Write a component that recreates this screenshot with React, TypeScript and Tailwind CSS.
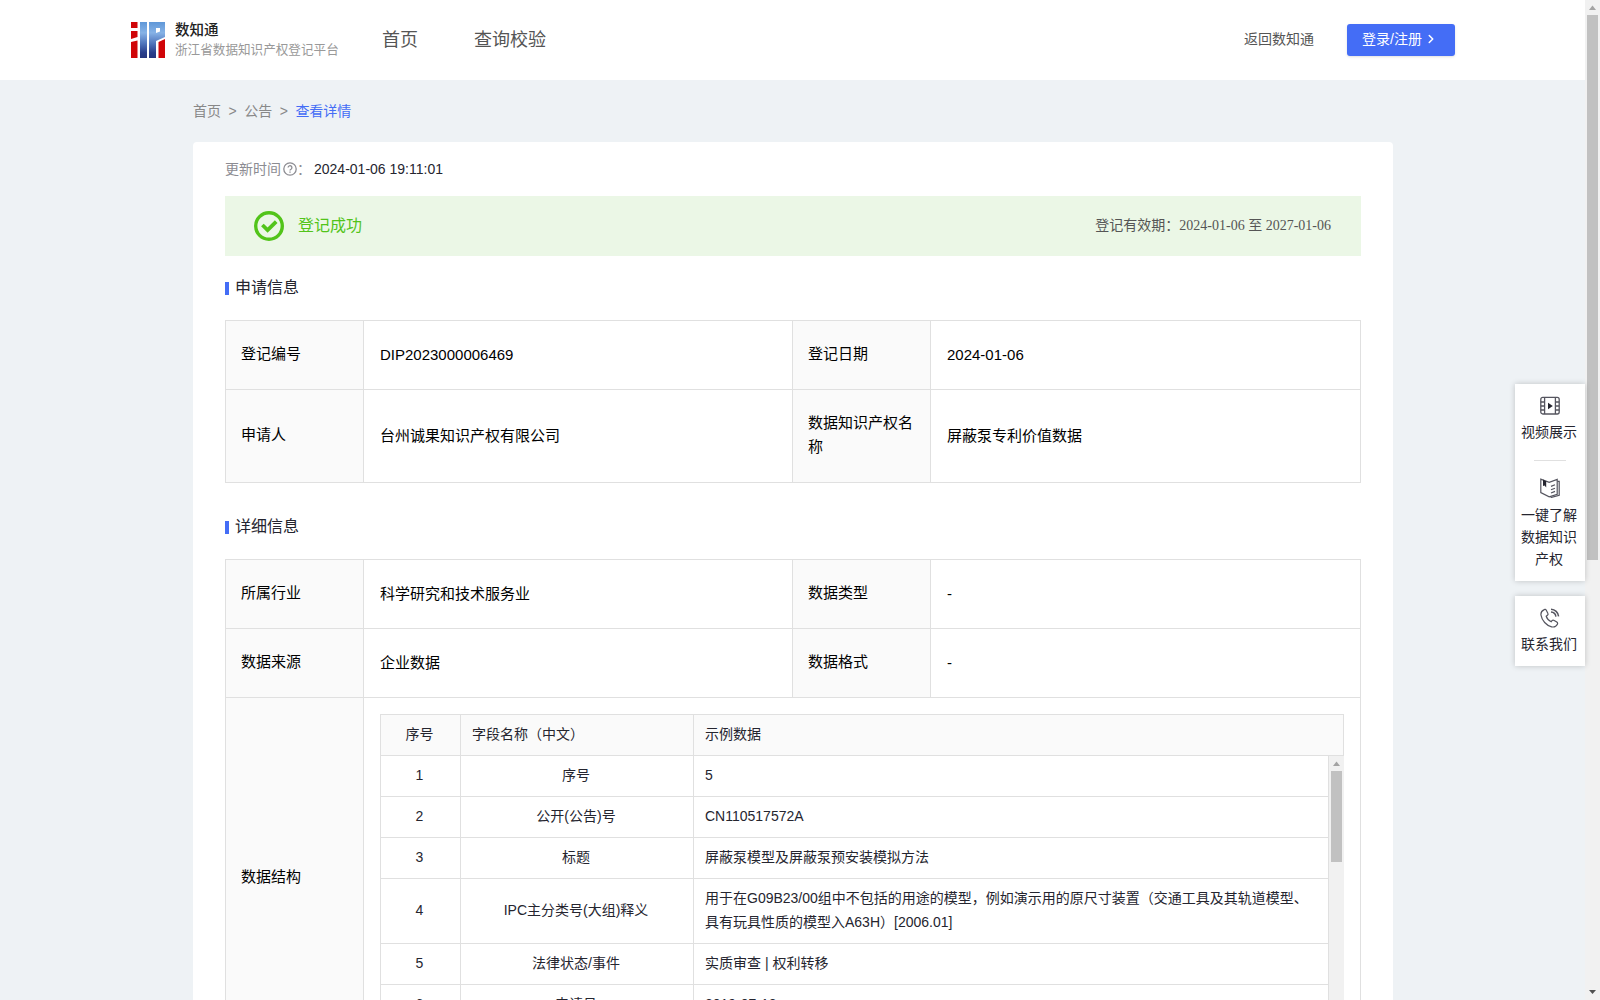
import React from 'react';
import { ChevronRight } from 'lucide-react';

interface FieldRow {
    id: number;
    name: string;
    sample: string;
}

const fieldRows: FieldRow[] = [
    { id: 1, name: '序号', sample: '5' },
    { id: 2, name: '公开(公告)号', sample: 'CN110517572A' },
    { id: 3, name: '标题', sample: '屏蔽泵模型及屏蔽泵预安装模拟方法' },
    {
        id: 4,
        name: 'IPC主分类号(大组)释义',
        sample: '用于在G09B23/00组中不包括的用途的模型，例如演示用的原尺寸装置（交通工具及其轨道模型、具有玩具性质的模型入A63H）[2006.01]',
    },
    { id: 5, name: '法律状态/事件', sample: '实质审查 | 权利转移' },
    { id: 6, name: '申请号', sample: '2019-07-18' },
];

const Logo = () => (
    <svg width="34" height="36" viewBox="0 0 34 36">
        <defs>
            <linearGradient id="logoBlue" x1="0" y1="0" x2="0" y2="36" gradientUnits="userSpaceOnUse">
                <stop offset="0" stopColor="#5f97d8" />
                <stop offset="0.3" stopColor="#86b2e6" />
                <stop offset="0.6" stopColor="#4f74bb" />
                <stop offset="0.85" stopColor="#2a3f8c" />
                <stop offset="1" stopColor="#26367f" />
            </linearGradient>
        </defs>
        <path d="M0 0h6.500v6H0zM0 9h6.500v6L0 17zM0 20l6.500-1.500V36H0zM27.500 20l6.500-3v19h-6.500z" fill="#d00508" />
        <path d="M9 0h7v36H9z" fill="url(#logoBlue)" />
        <path d="M18 0h16v15l-9 4v17h-7zM25 6v5l4-1.500V6z" fillRule="evenodd" fill="url(#logoBlue)" />
    </svg>
);

const SuccessIcon = () => (
    <svg width="30" height="30" viewBox="0 0 30 30" fill="none" stroke="#52c41a">
        <circle cx="15" cy="15" r="13.3" strokeWidth="3.4" />
        <path d="M8.400 14l5.200 5 8.600-8.400" strokeWidth="3.8" />
    </svg>
);

const HelpIcon = () => (
    <svg width="14" height="14" viewBox="0 0 14 14" fill="none" stroke="#8c8c92" strokeWidth="1.3">
        <circle cx="7" cy="7" r="6.2" />
        <path d="M5.1 5.6a1.9 1.9 0 1 1 2.9 1.6c-.7.4-1 .7-1 1.4M7 9.5v1.2" />
    </svg>
);

const VideoIcon = () => (
    <svg width="20" height="20" viewBox="0 0 20 20" fill="none" stroke="#55555f" strokeWidth="1.3">
        <rect x="0.8" y="1.4" width="18.4" height="16.6" rx="2" />
        <path d="M4.6 1.4V18M15.4 1.4V18M.8 6h3.8M.8 10h3.8M.8 14h3.8M15.4 6h3.8M15.4 10h3.8M15.4 14h3.8" />
        <path d="M8 6.800l4.800 3.200L8 13.200z" fill="#25252f" stroke="none" />
    </svg>
);

const BookIcon = () => (
    <svg width="20" height="20" viewBox="0 0 20 20" fill="none" stroke="#55555f" strokeWidth="1.2">
        <path d="M.8 1.200v13.400l8.400 4.200 8-2.600V1.400L9.200 4.400z" />
        <path d="M17.400 3.400h1.800v14l-8.600 2.200M11 8.400l4-1.600M11 11.800l4-1.600M11 15l4-1.600" />
        <path d="M3 1.400l3.200 1.800v6.200L4.600 7.600 3 8z" fill="#25252f" stroke="none" />
    </svg>
);

const PhoneIcon = () => (
    <svg width="20" height="20" viewBox="0 0 20 20" fill="none" stroke="#55555f" strokeWidth="1.2">
        <path d="M4.200 1.600C2 2.600.6 4.600 1 7.200c.8 5.200 5.400 10.400 10.600 11.600 2.600.6 4.800-.6 5.800-2.600.4-.8.1-1.600-.6-2.100l-2.600-1.700c-.8-.5-1.600-.4-2.200.3l-.8 1c-2.400-1-4.200-3-5-5.400l1.200-1c.6-.5.8-1.300.4-2L6.300 2.200c-.4-.8-1.300-1-2.100-.6z" />
        <path d="M11 1.200c4 .2 7.200 3.200 7.600 7.200M11 4c2.600.2 4.600 2 4.900 4.600" strokeWidth="1.500" />
    </svg>
);

const SectionTitle: React.FC<{ children: React.ReactNode }> = ({ children }) => (
    <div className="flex h-6 items-center text-base text-[#25252f]">
        <span className="mt-[3px] mr-1.5 h-[13px] w-1 bg-[#446df6]" />
        <span className="mt-px">{children}</span>
    </div>
);

const Label: React.FC<{ children: React.ReactNode }> = ({ children }) => (
    <div className="flex items-center border-r border-b border-[#e0e0e0] bg-[#fafafa] pr-4 pb-0.5 pl-[15px]">{children}</div>
);

const Value: React.FC<{ children: React.ReactNode }> = ({ children }) => (
    <div className="flex items-center border-r border-b border-[#e0e0e0] px-4 pb-px">{children}</div>
);

const FieldTable = () => (
    <div className="h-[328px] overflow-hidden border-t border-l border-[#e0e0e0] text-sm leading-6 text-[#25252f]">
        <div className="grid h-[41px] grid-cols-[80px_233px_650px] bg-[#fafafa]">
            <div className="flex items-center justify-center border-r border-b border-[#e0e0e0] pr-0.5 pb-0.5">序号</div>
            <div className="flex items-center border-r border-b border-[#e0e0e0] px-[11px] pb-0.5">字段名称（中文）</div>
            <div className="flex items-center border-r border-b border-[#e0e0e0] px-[11px] pb-0.5">示例数据</div>
        </div>
        <div className="flex h-[286px]">
            <div className="w-[948px] overflow-hidden">
                {fieldRows.map(row => (
                    <div key={row.id} className="grid grid-cols-[80px_233px_635px]">
                        <div className="flex items-center justify-center border-r border-b border-[#e0e0e0] pr-0.5 pb-0.5">{row.id}</div>
                        <div className="flex items-center justify-center border-r border-b border-[#e0e0e0] pr-0.5 pb-0.5">{row.name}</div>
                        <div className="border-r border-b border-[#e0e0e0] pt-[7px] pr-3 pb-[9px] pl-[11px]">{row.sample}</div>
                    </div>
                ))}
            </div>
            <div className="flex w-[15px] flex-col items-center bg-[#f1f1f1]">
                <svg width="15" height="15" viewBox="0 0 15 15">
                    <path d="M7.500 5.500L11 10H4z" fill="#a3a3a3" />
                </svg>
                <div className="h-[91px] w-[11px] bg-[#c1c1c1]" />
            </div>
        </div>
    </div>
);

const Header = () => (
    <header className="flex h-20 items-center bg-white pl-[131px]">
        <Logo />
        <div className="ml-2.5 w-[207px]">
            <div className="text-[14.5px] leading-5 font-medium text-[#222]">数知通</div>
            <div className="text-[12.6px] leading-5 whitespace-nowrap text-[#999]">浙江省数据知识产权登记平台</div>
        </div>
        <nav className="flex gap-14 text-lg text-[#555]">
            <span>首页</span>
            <span>查询校验</span>
        </nav>
        <span className="ml-[698px] pb-0.5 text-sm text-[#555]">返回数知通</span>
        <button className="ml-[33px] flex h-8 w-[108px] items-center rounded-[3px] bg-[#446df6] pb-0.5 pl-[15px] text-sm text-white shadow-sm">
            登录/注册
            <ChevronRight className="ml-0.5 h-3.5 w-3.5" strokeWidth={2.6} />
        </button>
    </header>
);

const SideBar = () => (
    <aside className="absolute top-[384px] right-[15px] w-[70px] text-center text-sm leading-[22px] text-[#25252f]">
        <div className="flex h-[197px] flex-col items-center bg-white pt-3 shadow-[0_0_6px_rgba(0,0,0,0.2)]">
            <VideoIcon />
            <span className="mt-[5px] pr-0.5">视频展示</span>
            <span className="mt-[17px] mb-[17px] h-px w-8 bg-[#e0e0e0]" />
            <BookIcon />
            <span className="mt-1.5 mr-0.5 w-14">一键了解数据知识产权</span>
        </div>
        <div className="mt-[15px] flex h-[70px] flex-col items-center bg-white pt-3 shadow-[0_0_6px_rgba(0,0,0,0.2)]">
            <PhoneIcon />
            <span className="mt-[5px] pr-0.5">联系我们</span>
        </div>
    </aside>
);

const App = () => (
    <div className="relative flex h-[1000px] w-[1600px] overflow-hidden bg-[#eef2f5] font-['Liberation_Sans','Noto_Sans_CJK_SC',sans-serif]">
        <div className="w-[1585px]">
            <Header />
            <main className="ml-[193px] w-[1200px]">
                <div className="flex h-[62px] items-center gap-[7.5px] pb-px text-sm text-[#888]">
                    <span>首页</span>
                    <span>&gt;</span>
                    <span>公告</span>
                    <span>&gt;</span>
                    <span className="text-[#446df6]">查看详情</span>
                </div>
                <div className="rounded bg-white px-8 pt-[15px]">
                    <div className="flex h-6 items-center text-sm text-[#8c8c92]">
                        更新时间
                        <span className="ml-0.5"><HelpIcon /></span>
                        <span>：</span>
                        <span className="ml-[3px] text-[#25252f]">2024-01-06 19:11:01</span>
                    </div>
                    <div className="mt-[15px] flex h-[60px] items-center bg-[#ebf7e6] pr-[30px] pl-[29px]">
                        <SuccessIcon />
                        <span className="ml-3.5 text-base text-[#52c41a]">登记成功</span>
                        <span className="ml-auto pb-0.5 text-sm text-[#555]">
                            登记有效期：
                            <span className="font-['Liberation_Serif','Noto_Sans_CJK_SC',serif]">2024-01-06 至 2027-01-06</span>
                        </span>
                    </div>

                    <div className="mt-[19px]"><SectionTitle>申请信息</SectionTitle></div>
                    <div className="mt-[21px] grid grid-cols-[138px_429px_138px_430px] grid-rows-[69px_93px] border-t border-l border-[#e0e0e0] text-[15px] leading-6 text-black">
                        <Label>登记编号</Label>
                        <Value>DIP2023000006469</Value>
                        <Label>登记日期</Label>
                        <Value>2024-01-06</Value>
                        <Label>申请人</Label>
                        <Value>台州诚果知识产权有限公司</Value>
                        <Label>数据知识产权名称</Label>
                        <Value>屏蔽泵专利价值数据</Value>
                    </div>

                    <div className="mt-[31px]"><SectionTitle>详细信息</SectionTitle></div>
                    <div className="mt-[21px] grid grid-cols-[138px_429px_138px_430px] grid-rows-[69px_69px_361px] border-t border-l border-[#e0e0e0] text-[15px] leading-6 text-black">
                        <Label>所属行业</Label>
                        <Value>科学研究和技术服务业</Value>
                        <Label>数据类型</Label>
                        <Value>-</Value>
                        <Label>数据来源</Label>
                        <Value>企业数据</Value>
                        <Label>数据格式</Label>
                        <Value>-</Value>
                        <Label>数据结构</Label>
                        <div className="col-span-3 border-r border-b border-[#e0e0e0] p-4">
                            <FieldTable />
                        </div>
                    </div>
                </div>
            </main>
        </div>
        <div className="flex w-[15px] flex-col items-center bg-[#f1f1f1]">
            <svg width="15" height="15" viewBox="0 0 15 15">
                <path d="M7.500 5.500L11 10H4z" fill="#a3a3a3" />
            </svg>
            <div className="h-[545px] w-[11px] bg-[#c1c1c1]" />
            <svg className="mt-auto" width="15" height="15" viewBox="0 0 15 15">
                <path d="M4 5h7l-3.500 4z" fill="#505050" />
            </svg>
        </div>
        <SideBar />
    </div>
);

export default App;
